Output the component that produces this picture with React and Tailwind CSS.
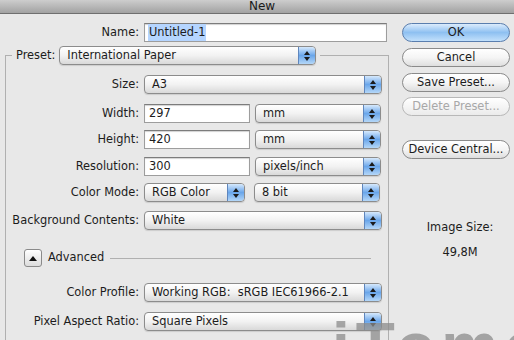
import React from 'react';

const Stepper = () => (
  <div className="flex h-full w-[17px] flex-col items-center justify-center gap-[2px] rounded-r-[3px] border-l border-[#5f86bd] bg-linear-to-b from-[#d6e9fc] via-[#6aa6ea] to-[#b4d7f8]">
    <svg width="6" height="4" viewBox="0 0 6 4">
      <path d="M3 0L6 4H0Z" fill="#1b1b1b" />
    </svg>
    <svg width="6" height="4" viewBox="0 0 6 4">
      <path d="M0 0H6L3 4Z" fill="#1b1b1b" />
    </svg>
  </div>
);

const Select = ({ value, className }) => (
  <div
    className={`flex h-[19px] items-center overflow-hidden rounded-[4px] border border-[#8c8c8c] bg-linear-to-b from-white via-[#f2f2f2] to-[#d9d9d9] shadow-[0_1px_1px_rgba(0,0,0,0.12)] ${className}`}
  >
    <span className="flex-1 truncate pl-[7px] whitespace-pre">{value}</span>
    <Stepper />
  </div>
);

const Input = ({ value, className, selected }) => (
  <div
    className={`flex h-[19px] items-center border border-[#9d9d9d] border-t-[#7c7c7c] bg-white pl-[3px] shadow-[inset_0_1px_1px_rgba(0,0,0,0.18)] ${className}`}
  >
    {selected ? <span className="bg-[#b5d5ff] px-[1px]">{value}</span> : <span className="pl-[1px]">{value}</span>}
  </div>
);

const Row = ({ label, children, className }) => (
  <div className={`flex items-center ${className}`}>
    <span className="w-[133px] text-right">{label}</span>
    <div className="ml-[5px] flex items-center gap-[5px]">{children}</div>
  </div>
);

const Button = ({ children, primary, disabled, className }) => (
  <div
    className={`flex h-[19px] items-center justify-center rounded-full border ${
      primary
        ? 'border-[#5a7eae] bg-linear-to-b from-[#dcecfc] via-[#8ec0f1] to-[#c2e0fb]'
        : disabled
          ? 'border-[#b8b8b8] bg-linear-to-b from-white to-[#ebebeb] text-[#a8a8a8]'
          : 'border-[#8a8a8a] bg-linear-to-b from-white via-[#f5f5f5] to-[#dedede]'
    } ${className}`}
  >
    {children}
  </div>
);

export default function App() {
  return (
    <div
      className="relative h-[340px] w-[514px] overflow-hidden bg-[#e8e8e8] text-[11.4px] text-[#1c1c1c]"
      style={{ fontFamily: '"DejaVu Sans", "Liberation Sans", sans-serif' }}
    >
      {/* Title bar */}
      <div className="flex h-[14px] items-end justify-center overflow-hidden border-b border-[#6f6f6f] bg-linear-to-b from-[#cdcdcd] to-[#a2a2a2]">
        <span className="ml-[10px] text-[12px] leading-[13px] text-[#1a1a1a]">New</span>
      </div>

      <div className="flex">
        {/* Left column */}
        <div className="w-[390px]">
          <div className="mt-[9px] flex items-center">
            <span className="w-[139px] text-right">Name:</span>
            <Input value="Untitled-1" selected className="ml-[5px] w-[243px]" />
          </div>

          <fieldset className="mt-[4px] ml-[5px] h-[300px] w-[384px] border border-[#b0b0b0] pt-[10px]">
            <legend className="ml-[6px] px-[4px]">
              <div className="flex items-center gap-[4px]">
                <span>Preset:</span>
                <Select value="International Paper" className="w-[257px]" />
              </div>
            </legend>

            <Row label="Size:">
              <Select value="A3" className="w-[238px]" />
            </Row>
            <Row label="Width:" className="mt-[10px]">
              <Input value="297" className="w-[106px]" />
              <Select value="mm" className="w-[126px]" />
            </Row>
            <Row label="Height:" className="mt-[7px]">
              <Input value="420" className="w-[106px]" />
              <Select value="mm" className="w-[126px]" />
            </Row>
            <Row label="Resolution:" className="mt-[8px]">
              <Input value="300" className="w-[106px]" />
              <Select value="pixels/inch" className="w-[126px]" />
            </Row>
            <Row label="Color Mode:" className="mt-[7px]">
              <Select value="RGB Color" className="w-[101px]" />
              <Select value="8 bit" className="ml-[4px] w-[126px]" />
            </Row>
            <Row label="Background Contents:" className="mt-[9px]">
              <Select value="White" className="w-[238px]" />
            </Row>

            <div className="mt-[19px] flex items-center pr-[17px] pl-[18px]">
              <div className="flex h-[18px] w-[18px] items-center justify-center rounded-[3px] border border-[#8a8a8a] bg-linear-to-b from-white to-[#dcdcdc]">
                <svg width="8" height="5" viewBox="0 0 8 5">
                  <path d="M4 0L8 5H0Z" fill="#111" />
                </svg>
              </div>
              <span className="ml-[6px]">Advanced</span>
              <div className="ml-[6px] h-px flex-1 bg-[#b0b0b0]" />
            </div>

            <Row label="Color Profile:" className="mt-[16px]">
              <Select value="Working RGB:  sRGB IEC61966-2.1" className="w-[238px]" />
            </Row>
            <Row label="Pixel Aspect Ratio:" className="mt-[10px]">
              <Select value="Square Pixels" className="w-[238px]" />
            </Row>
          </fieldset>
        </div>

        {/* Right column */}
        <div className="ml-[12px] flex w-[108px] flex-col">
          <Button primary className="mt-[9px]">OK</Button>
          <Button className="mt-[6px]">Cancel</Button>
          <Button className="mt-[6px]">Save Preset...</Button>
          <Button disabled className="mt-[5px]">Delete Preset...</Button>
          <Button className="mt-[24px]">Device Central...</Button>
          <div className="mt-[60px] flex flex-col items-center pl-[8px]">
            <span>Image Size:</span>
            <span className="mt-[8px]">49,8M</span>
          </div>
        </div>
      </div>

      {/* watermark */}
      <div
        className="pointer-events-none absolute top-[314px] left-[332px] text-[64px] leading-none font-bold tracking-[6px] text-[#8c8c8c]/75"
        style={{ fontFamily: '"Liberation Sans", sans-serif' }}
      >
        iTome
      </div>
    </div>
  );
}
